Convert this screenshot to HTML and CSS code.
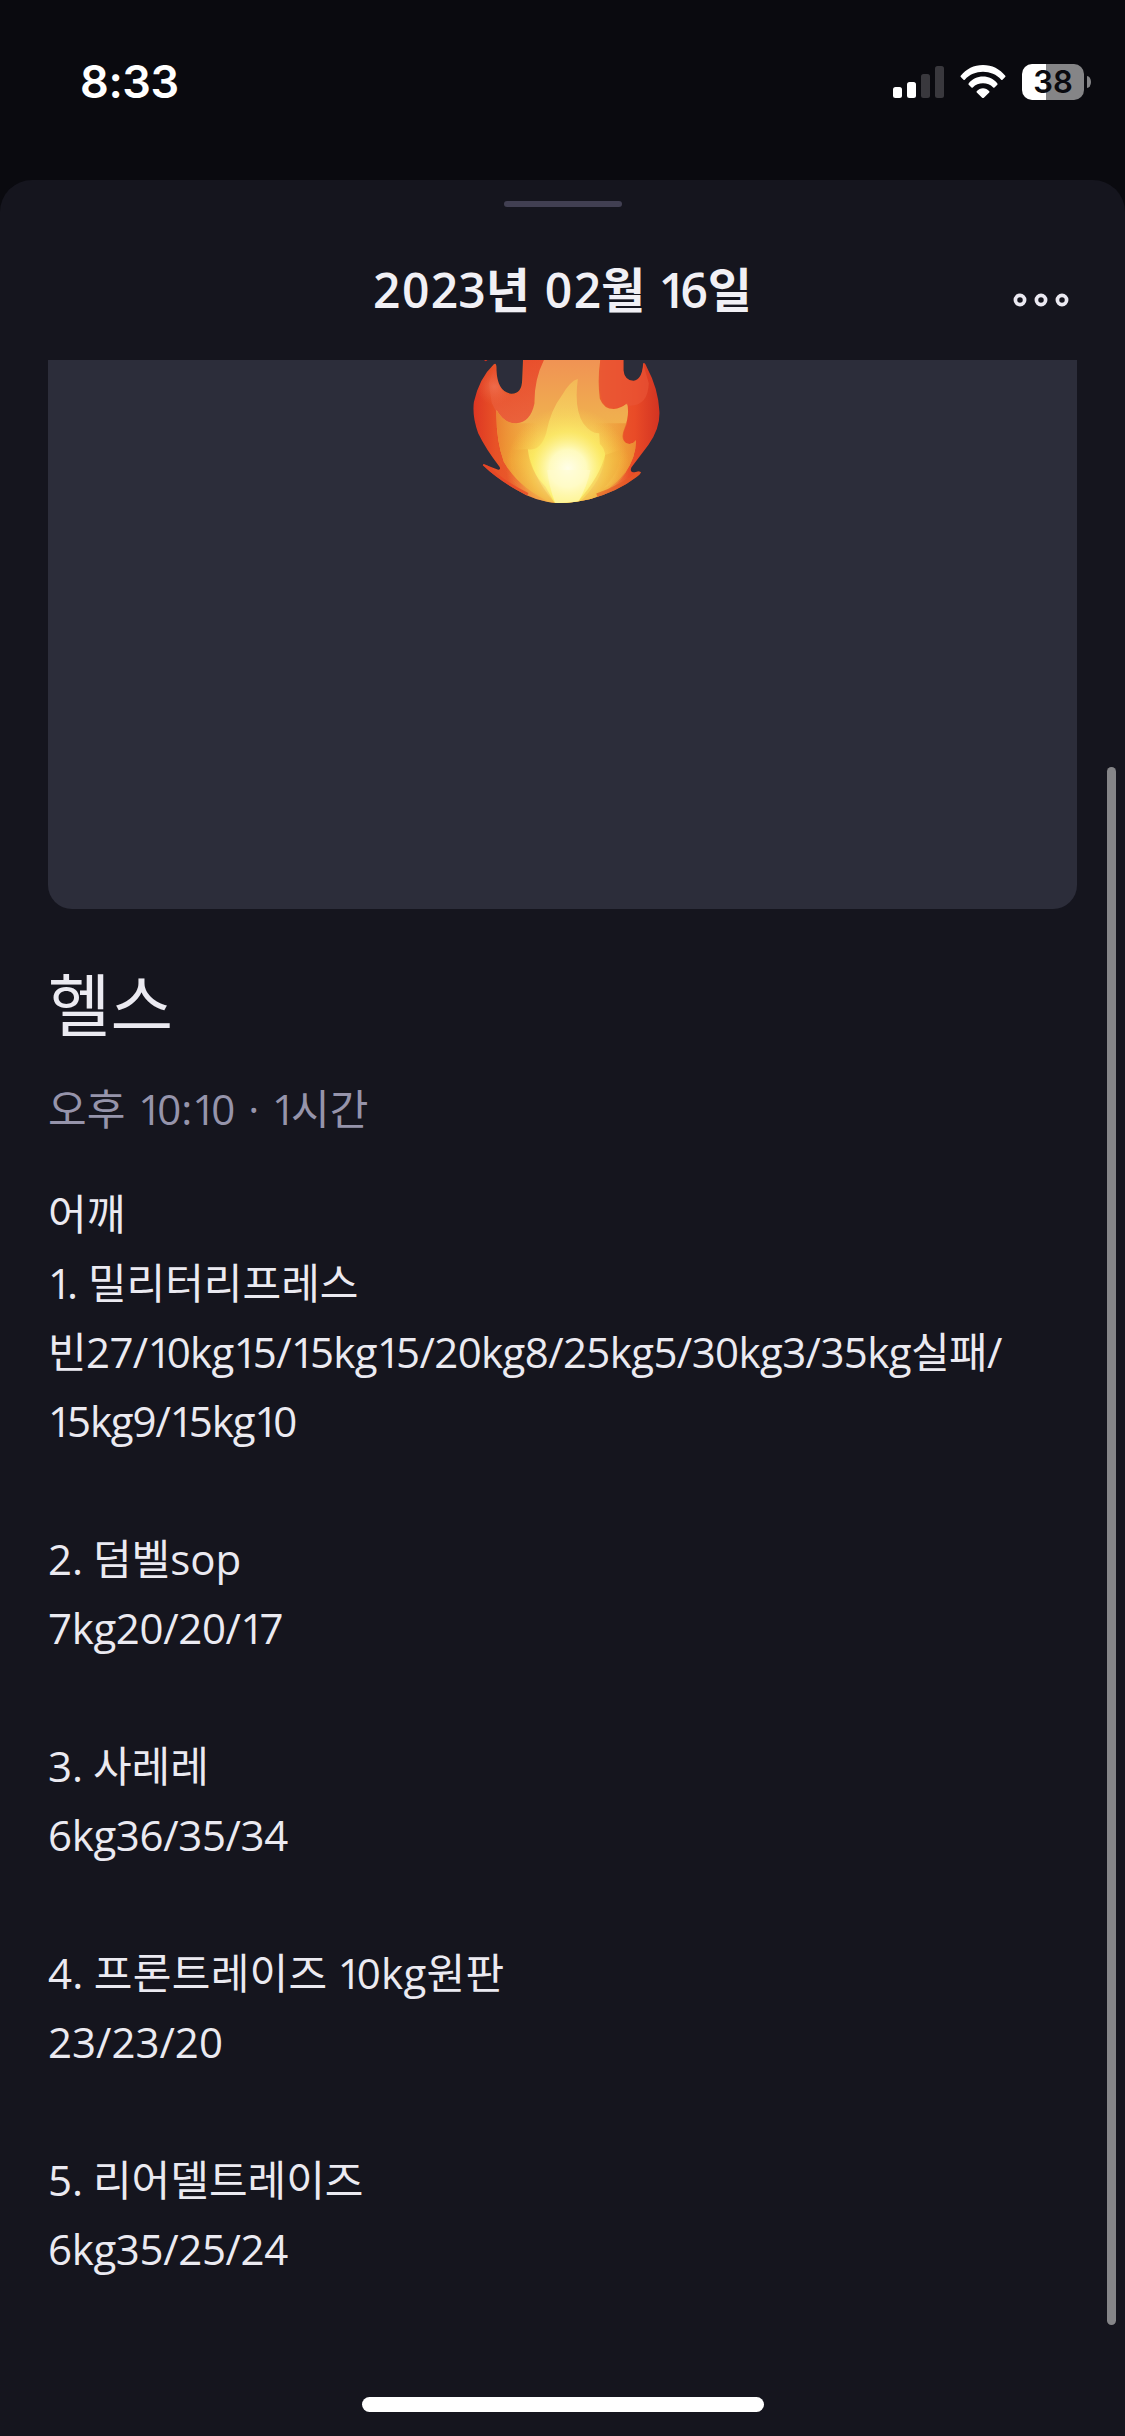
FILE: index.html
```html
<!DOCTYPE html>
<html lang="ko">
<head>
<meta charset="utf-8">
<title>2023년 02월 16일</title>
<link rel="stylesheet" href="styles.css">
</head>
<body>
<div class="screen">
  <header class="status">
    <span class="clock">8:33</span>
    <div class="indicators">
      <svg class="signal" width="51" height="36" viewBox="0 0 51 36">
        <rect x="0" y="23" width="9" height="11" rx="2.5" fill="#fff"/>
        <rect x="14" y="18" width="9" height="16" rx="2.5" fill="#fff"/>
        <rect x="28" y="10" width="9" height="24" rx="2.5" fill="#39383d"/>
        <rect x="42" y="2" width="9" height="32" rx="2.5" fill="#39383d"/>
      </svg>
      <svg class="wifi" width="46" height="36" viewBox="0 0 46 36" fill="#fff">
        <path d="M.7 11.8C6 5 14 1 23 1s17 4 22.300 10.800q.5.700-.1 1.300l-2.700 2.700q-.7.600-1.300-.1C36.500 10.500 30 7.800 23 7.800S9.500 10.500 4.800 15.700q-.6.700-1.300.1L.8 13.100q-.6-.600-.1-1.300z"/>
        <path d="M8.600 19.400C12.200 15 17.300 12.600 23 12.600S33.800 15 37.400 19.400q.5.700-.1 1.300l-2.800 2.800q-.7.600-1.300-.1C30.500 20.600 27 19.200 23 19.200s-7.500 1.400-10.200 4.200q-.6.700-1.300.1l-2.800-2.800q-.6-.600-.1-1.300z"/>
        <path d="M16.700 27.200C18.500 25.200 20.600 24.200 23 24.200s4.500 1 6.300 3q.5.700-.1 1.300l-5.300 5.200q-.9.800-1.800 0l-5.300-5.200q-.6-.600-.1-1.300z"/>
      </svg>
      <div class="battery"><span class="level">38</span></div>
      <span class="battery-cap"></span>
    </div>
  </header>

  <main class="sheet">
    <div class="grabber"></div>
    <div class="titlebar">
      <h1 class="date">2<span class="zero">0</span>23년 <span class="zero">0</span>2월 <span class="one">1</span>6일</h1>
      <svg class="more" width="56" height="14" viewBox="0 0 56 14" fill="none" stroke="#ebe9f2" stroke-width="3.700">
        <circle cx="7" cy="7" r="4.600"/><circle cx="28" cy="7" r="4.600"/><circle cx="49" cy="7" r="4.600"/>
      </svg>
    </div>

    <section class="cover">
      <svg width="200" height="150" viewBox="37.5 60 600 450">
        <defs>
          <linearGradient id="outer" x1="0" x2="1">
            <stop offset="0" stop-color="#dc3322"/><stop offset=".13" stop-color="#e85227"/>
            <stop offset=".5" stop-color="#ee7138"/><stop offset=".85" stop-color="#e94b27"/>
            <stop offset="1" stop-color="#cf2f21"/>
          </linearGradient>
          <linearGradient id="tongue" x1="0" y1="0" x2="0" y2="1">
            <stop offset="0" stop-color="#e8482a"/><stop offset="1" stop-color="#ea6440"/>
          </linearGradient>
          <linearGradient id="orange" x1="0" y1="0" x2="0" y2="1">
            <stop offset="0" stop-color="#f09254"/><stop offset=".4" stop-color="#f0ae4f"/>
            <stop offset=".7" stop-color="#f4bc3f"/><stop offset="1" stop-color="#e88730"/>
          </linearGradient>
          <linearGradient id="side" x1="0" x2="1">
            <stop offset="0" stop-color="#e97a2c" stop-opacity=".85"/><stop offset=".3" stop-color="#f0982e" stop-opacity="0"/>
            <stop offset=".7" stop-color="#f0982e" stop-opacity="0"/><stop offset="1" stop-color="#e97a2c" stop-opacity=".75"/>
          </linearGradient>
          <linearGradient id="inner" x1="0" y1="0" x2="0" y2="1">
            <stop offset="0" stop-color="#f3b857"/><stop offset=".4" stop-color="#f6d562"/><stop offset="1" stop-color="#fbea3c"/>
          </linearGradient>
          <radialGradient id="glow" cx="352" cy="385" r="185" gradientUnits="userSpaceOnUse">
            <stop offset="0" stop-color="#fffee8"/><stop offset=".3" stop-color="#fffcc4" stop-opacity=".95"/>
            <stop offset=".6" stop-color="#fdf06b" stop-opacity=".6"/><stop offset="1" stop-color="#f9d34f" stop-opacity="0"/>
          </radialGradient>
          <radialGradient id="shine" cx="132" cy="140" r="55" gradientUnits="userSpaceOnUse">
            <stop offset="0" stop-color="#f27a5c" stop-opacity=".6"/><stop offset="1" stop-color="#ee6a40" stop-opacity="0"/>
          </radialGradient>
          <clipPath id="body">
            <path d="M218 50H519V92Q522 120 549 122Q575 120 578 70Q583 66 589 82Q623 145 627 215Q629 265 594 314L543 382Q536 397 552 397Q565 393 571 396Q571 402 558 411Q504 453 420 477Q363 490 320 489Q254 485 195 448Q138 415 97 376Q97 370 108 376L143 389Q152 390 147 380Q106 328 83 280Q64 225 70 187Q86 115 130 73Q139 66 138 90Q140 156 182 161Q214 162 215 120Z"/>
          </clipPath>
        </defs>
        <path d="M100 60h11l-5 4z" fill="#d8321f"/>
        <g clip-path="url(#body)">
          <rect x="60" y="50" width="580" height="450" fill="url(#outer)"/>
          <path d="M218 50H285Q255 115 252 180Q247 250 197 250Q150 250 124 190L115 130L135 75Q137 165 182 166Q218 165 218 115Z" fill="url(#tongue)" opacity=".75"/>
          <rect x="60" y="60" width="170" height="180" fill="url(#shine)"/>
          <path d="M283 55H450Q440 120 448 176Q460 207 490 207Q510 206 530 190Q538 225 522 265Q508 295 526 309Q545 317 556 301Q557 350 525 397Q482 452 400 490H305Q205 445 160 365Q136 300 138 210Q160 250 197 250Q240 248 252 190Q251 115 283 55Z" fill="url(#orange)"/>
          <path d="M138 210Q160 250 197 250H530Q508 295 526 309Q545 317 556 301Q557 350 525 397Q482 452 400 490H305Q205 445 160 365Q136 300 138 210Z" fill="url(#side)"/>
          <path d="M450 60H519V90Q522 124 549 124Q574 121 578 72L595 130Q592 200 535 197Q525 187 515 197Q485 211 462 192Q440 165 450 60Z" fill="#e95536" opacity=".65"/>
          <path d="M382 117Q360 122 335 165Q300 210 287 280Q270 335 232 328Q235 390 285 440L313 490H382Q455 425 464 350Q464 325 448 312L446 280Q421 281 398 250Q370 205 382 117Z" fill="url(#inner)"/>
          <circle cx="352" cy="385" r="185" fill="url(#glow)"/>
          <path d="M232 328Q242 405 313 490H290Q185 448 143 350Q170 415 235 460Q180 400 185 330Z" fill="#eea23a" opacity=".3"/>
          <path d="M464 345Q448 410 382 485H410Q500 450 530 390Q505 425 460 445Q515 385 510 330Z" fill="#edab3c" opacity=".35"/>
          <path d="M290 390Q295 440 315 492H380Q410 440 420 390Z" fill="#fffbd0" opacity=".5"/>
          <path d="M97 373Q153 432 230 467" fill="none" stroke="#e74527" stroke-width="18" opacity=".75"/>
          <path d="M571 396Q520 440 440 468" fill="none" stroke="#e45b27" stroke-width="16" opacity=".65"/>
        </g>
      </svg>
    </section>

    <article class="entry">
      <h2 class="name">헬스</h2>
      <p class="meta">오후 <span class="one">1</span>0:<span class="one">1</span>0 · <span class="one">1</span>시간</p>
      <div class="notes">
        <p>어깨</p>
        <p><span class="one">1</span>. 밀리터리프레스</p>
        <p class="long">빈27/<span class="one">1</span>0kg<span class="one">1</span>5/<span class="one">1</span>5kg<span class="one">1</span>5/20kg8/25kg5/30kg3/35kg실패/</p>
        <p class="tight"><span class="one">1</span>5kg9/<span class="one">1</span>5kg<span class="one">1</span>0</p>
        <p class="gap">2. 덤벨sop</p>
        <p class="sets">7kg20/20/<span class="one">1</span>7</p>
        <p class="gap">3. 사레레</p>
        <p class="sets">6kg36/35/34</p>
        <p class="gap wide">4. 프론트레이즈 <span class="one">1</span>0kg원판</p>
        <p>23/23/20</p>
        <p class="gap">5. 리어델트레이즈</p>
        <p class="sets">6kg35/25/24</p>
      </div>
    </article>
    <div class="scrollbar"></div>
    <div class="home"></div>
  </main>
</div>
</body>
</html>
```
FILE: styles.css
```css
* { box-sizing: border-box; margin: 0; padding: 0; }
body { background: #0a0a0f; }
.screen {
  width: 1125px; height: 2436px; overflow: hidden;
  display: flex; flex-direction: column;
  font-family: "Open Sans", "Noto Sans CJK KR", sans-serif;
  color: #ebeaf1;
}
.status {
  height: 180px; padding: 64px 34px 0 80px;
  display: flex; justify-content: space-between; align-items: flex-start;
}
.clock { font: 600 45px/36px Inter, sans-serif; letter-spacing: -.4px; color: #fff; }
.indicators { display: flex; align-items: center; height: 36px; }
.wifi { margin-left: 16px; }
.battery {
  margin-left: 16px; width: 62px; height: 36px; border-radius: 10px;
  background: linear-gradient(90deg, #fff 24px, #858587 24px);
  display: flex; align-items: center; justify-content: center;
}
.level { font: 600 31px/36px Inter, sans-serif; color: #0a0a0f; }
.battery-cap { margin-left: 3px; width: 4px; height: 12px; border-radius: 0 4px 4px 0 / 0 6px 6px 0; background: #858587; }
.sheet {
  position: relative; flex: 1; background: #15151e;
  border-radius: 32px 32px 0 0;
  display: flex; flex-direction: column;
}
.grabber { width: 118px; height: 6px; border-radius: 3px; background: #413f52; margin: 21px auto 0; }
.titlebar {
  height: 153px; padding: 0 56px;
  display: grid; grid-template-columns: 56px 1fr 56px; align-items: start;
}
.date {
  grid-column: 2; text-align: center; font-weight: 600; font-size: 48px; line-height: 70px;
  margin-top: 48px; white-space: nowrap; word-spacing: 1px; color: #f1f0f5;
}
.more { margin-top: 86px; }
.cover {
  height: 549px; margin: 0 48px; background: #2c2d3a; border-radius: 0 0 24px 24px;
  display: flex; justify-content: center; align-items: flex-start;
}
.entry { padding: 46px 48px 0; }
.name { font-weight: 400; font-size: 68px; line-height: 100px; }
.meta { font-size: 42px; line-height: 62px; margin-top: 23px; word-spacing: 2px; color: #9694ab; }
.notes { font-size: 42px; line-height: 69px; margin-top: 39px; white-space: nowrap; word-spacing: -1px; }
/* proportional figures: a narrow one and a slightly wide zero */
.one { letter-spacing: -.12em; }
.zero { margin: 0 .03em; }
.gap { margin-top: 69px; }
.long { letter-spacing: -.6px; }
.tight { letter-spacing: -1.1px; }
.sets { letter-spacing: -.35px; }
.wide { letter-spacing: .3px; }
.scrollbar { position: absolute; right: 9px; top: 587px; width: 9px; height: 1558px; border-radius: 5px; background: #858588; }
.home { width: 402px; height: 15px; border-radius: 8px; background: #fff; margin: auto auto 24px; }
```
